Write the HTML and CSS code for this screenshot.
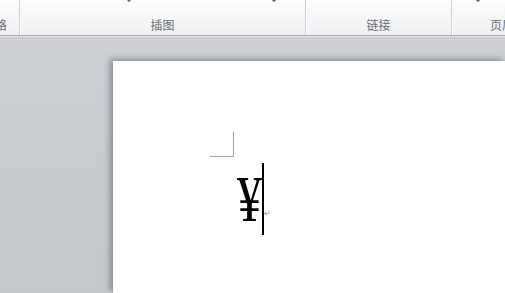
FILE: index.html
```html
<!DOCTYPE html>
<html lang="zh-CN">
<head>
    <meta charset="UTF-8">
    <title>文档</title>
    <link rel="stylesheet" href="styles.css">
</head>
<body>
    <div class="ribbon">
        <div class="group first"><span class="label">格</span></div>
        <div class="group pics"><span class="drop d1"></span><span class="drop d2"></span><span class="label">插图</span></div>
        <div class="group links"><span class="label">链接</span></div>
        <div class="group header"><span class="drop d3"></span><span class="label">页眉</span></div>
    </div>
    <div class="workspace">
        <div class="page">
            <div class="corner"></div>
            <div class="line">
                <span class="yen">¥</span><span class="caret"></span><span class="mark">↵</span>
            </div>
        </div>
    </div>
</body>
</html>
```

FILE: styles.css
```css
body {
    margin: 0;
    width: 505px;
    height: 293px;
    overflow: hidden;
    font-family: "Noto Sans CJK SC", "Liberation Sans", sans-serif;
    background: linear-gradient(#cdd0d5, #c5c8cd);
}
.ribbon {
    display: flex;
    height: 35px;
    background: linear-gradient(#fdfdfe, #eff0f2);
    border-bottom: 1px solid #a9acb1;
    box-shadow: 0 1px 0 #dfe1e4;
}
.group {
    position: relative;
    display: flex;
    align-items: flex-end;
    justify-content: center;
    border-right: 1px solid #c9ccd1;
    box-shadow: 1px 0 0 #fff;
}
.first { width: 19px; justify-content: flex-start; overflow: hidden; }
.pics { width: 285px; }
.links { width: 145px; }
.header { flex: 1; border-right: none; justify-content: flex-start; padding-left: 38px; overflow: hidden; }
.label {
    font-size: 12px;
    color: #6a6d72;
    line-height: 14px;
    padding-bottom: 3px;
    white-space: nowrap;
}
.first .label { margin-left: -5px; }
.drop {
    position: absolute;
    top: 0;
    width: 0;
    height: 0;
    border-left: 2px solid transparent;
    border-right: 2px solid transparent;
    border-top: 2px solid #555;
}
.d1 { left: 107px; }
.d2 { left: 252px; }
.d3 { left: 24px; }
.workspace {
    padding: 25px 0 0 113px;
}
.page {
    box-sizing: border-box;
    height: 232px;
    background: #fff;
    padding: 71px 0 0 97px;
    box-shadow: -3px -2px 6px rgba(80, 85, 95, 0.55);
}
.corner {
    width: 23px;
    height: 24px;
    border-right: 1px solid #a3a3a3;
    border-bottom: 1px solid #a3a3a3;
}
.line {
    display: flex;
    align-items: flex-start;
    margin: 6px 0 0 27px;
}
.yen {
    font-family: "Liberation Serif", serif;
    font-size: 50px;
    line-height: 72px;
    color: #000;
    display: inline-block;
    transform: scaleY(1.3);
}
.caret {
    width: 2px;
    height: 72px;
    background: #000;
}
.mark {
    font-size: 8px;
    color: #888;
    margin-top: 44px;
}
```
